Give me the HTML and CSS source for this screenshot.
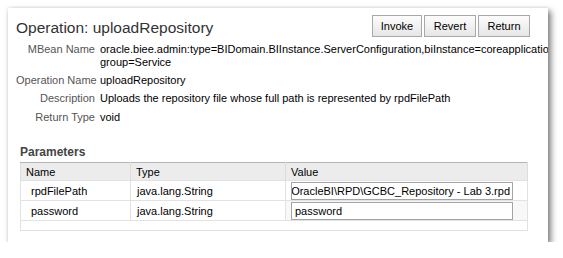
FILE: index.html
```html
<!DOCTYPE html>
<html lang="en">
<head>
    <meta charset="UTF-8">
    <title>Operation: uploadRepository</title>
    <link rel="stylesheet" href="styles.css">
</head>
<body>
    <div class="panel">
        <div class="panel-header">
            <h1>Operation: uploadRepository</h1>
            <div class="button-group">
                <button class="action-button">Invoke</button>
                <button class="action-button">Revert</button>
                <button class="action-button">Return</button>
            </div>
        </div>

        <div class="details">
            <div class="label">MBean Name</div>
            <div class="value">oracle.biee.admin:type=BIDomain.BIInstance.ServerConfiguration,biInstance=coreapplication,<br>group=Service</div>

            <div class="label">Operation Name</div>
            <div class="value">uploadRepository</div>

            <div class="label">Description</div>
            <div class="value">Uploads the repository file whose full path is represented by rpdFilePath</div>

            <div class="label spaced">Return Type</div>
            <div class="value spaced">void</div>
        </div>

        <h2>Parameters</h2>
        <table class="param-table">
            <thead>
                <tr>
                    <th class="col-name">Name</th>
                    <th class="col-type">Type</th>
                    <th>Value</th>
                </tr>
            </thead>
            <tbody>
                <tr>
                    <td>rpdFilePath</td>
                    <td>java.lang.String</td>
                    <td><div class="text-field scrolled"><span>C:\OracleBI\RPD\GCBC_Repository - Lab 3.rpd</span></div></td>
                </tr>
                <tr class="alt">
                    <td>password</td>
                    <td>java.lang.String</td>
                    <td><div class="text-field"><span>password</span></div></td>
                </tr>
                <tr class="empty">
                    <td colspan="3"></td>
                </tr>
            </tbody>
        </table>
    </div>
</body>
</html>
```

FILE: styles.css
```css
* {
    margin: 0;
    padding: 0;
    box-sizing: border-box;
}

body {
    background: #fff;
    font-family: 'Liberation Sans', Arial, sans-serif;
    font-size: 11px;
    color: #000;
    overflow: hidden;
}

.panel {
    width: 540px;
    height: 234px;
    margin: 8px 0 0 8px;
    background: #fff;
    overflow: hidden;
    box-shadow: 3px 3px 6px rgba(0, 0, 0, 0.5), 0 0 3px rgba(0, 0, 0, 0.12);
}

.panel-header {
    display: flex;
    justify-content: space-between;
    align-items: flex-start;
    padding: 7px 18px 0 8px;
}

h1 {
    font-size: 15.5px;
    font-weight: normal;
    color: #333;
    margin-top: 5px;
    line-height: 16px;
}

.button-group {
    display: flex;
    gap: 2px;
}

.action-button {
    width: 52px;
    height: 22px;
    font-family: inherit;
    font-size: 11px;
    color: #000;
    border: 1px solid #a8a8a8;
    background: linear-gradient(#fcfcfc, #e6e6e6);
}

.action-button:first-child {
    width: 50px;
}

.details {
    display: grid;
    grid-template-columns: 79px auto;
    column-gap: 5px;
    row-gap: 5px;
    padding: 6px 0 0 8px;
    line-height: 13px;
    white-space: nowrap;
}

.label {
    text-align: right;
    color: #555;
}

.spaced {
    margin-top: 1px;
}

h2 {
    font-size: 12px;
    font-weight: bold;
    color: #444;
    margin: 21px 0 0 12px;
    line-height: 14px;
}

.param-table {
    margin: 3px 0 0 12px;
    width: 508px;
    border-collapse: collapse;
    table-layout: fixed;
}

.param-table th {
    text-align: left;
    font-weight: normal;
    background: #ececec;
    border-top: 1px solid #b4b4b4;
    border-left: 1px solid #dcdcdc;
    border-right: 1px solid #dcdcdc;
    padding: 0 5px;
    height: 18px;
}

.col-name {
    width: 110px;
}

.col-type {
    width: 155px;
}

.param-table td {
    border: 1px solid #e2e2e2;
    padding: 0 5px 0 10px;
    height: 20px;
    vertical-align: middle;
    white-space: nowrap;
    overflow: hidden;
}

.param-table td:nth-child(2) {
    padding-left: 6px;
}

.param-table tr.alt td {
    background: #f8f8f8;
}

.param-table tr.alt td:first-child,
.param-table tr.alt td:nth-child(2) {
    background: #fff;
}

.param-table tr.empty td {
    height: 10px;
}

.param-table td:nth-child(3) {
    padding: 0 14px 0 5px;
}

.text-field {
    overflow: hidden;
    height: 18px;
    border: 1px solid #a4a4a4;
    background: #fff;
    padding: 0 3px;
    line-height: 16px;
    font-size: 11px;
    white-space: nowrap;
}

.text-field.scrolled {
    direction: rtl;
    padding: 0 2px 0 0;
}

.text-field.scrolled span {
    direction: ltr;
    unicode-bidi: isolate;
}
```
